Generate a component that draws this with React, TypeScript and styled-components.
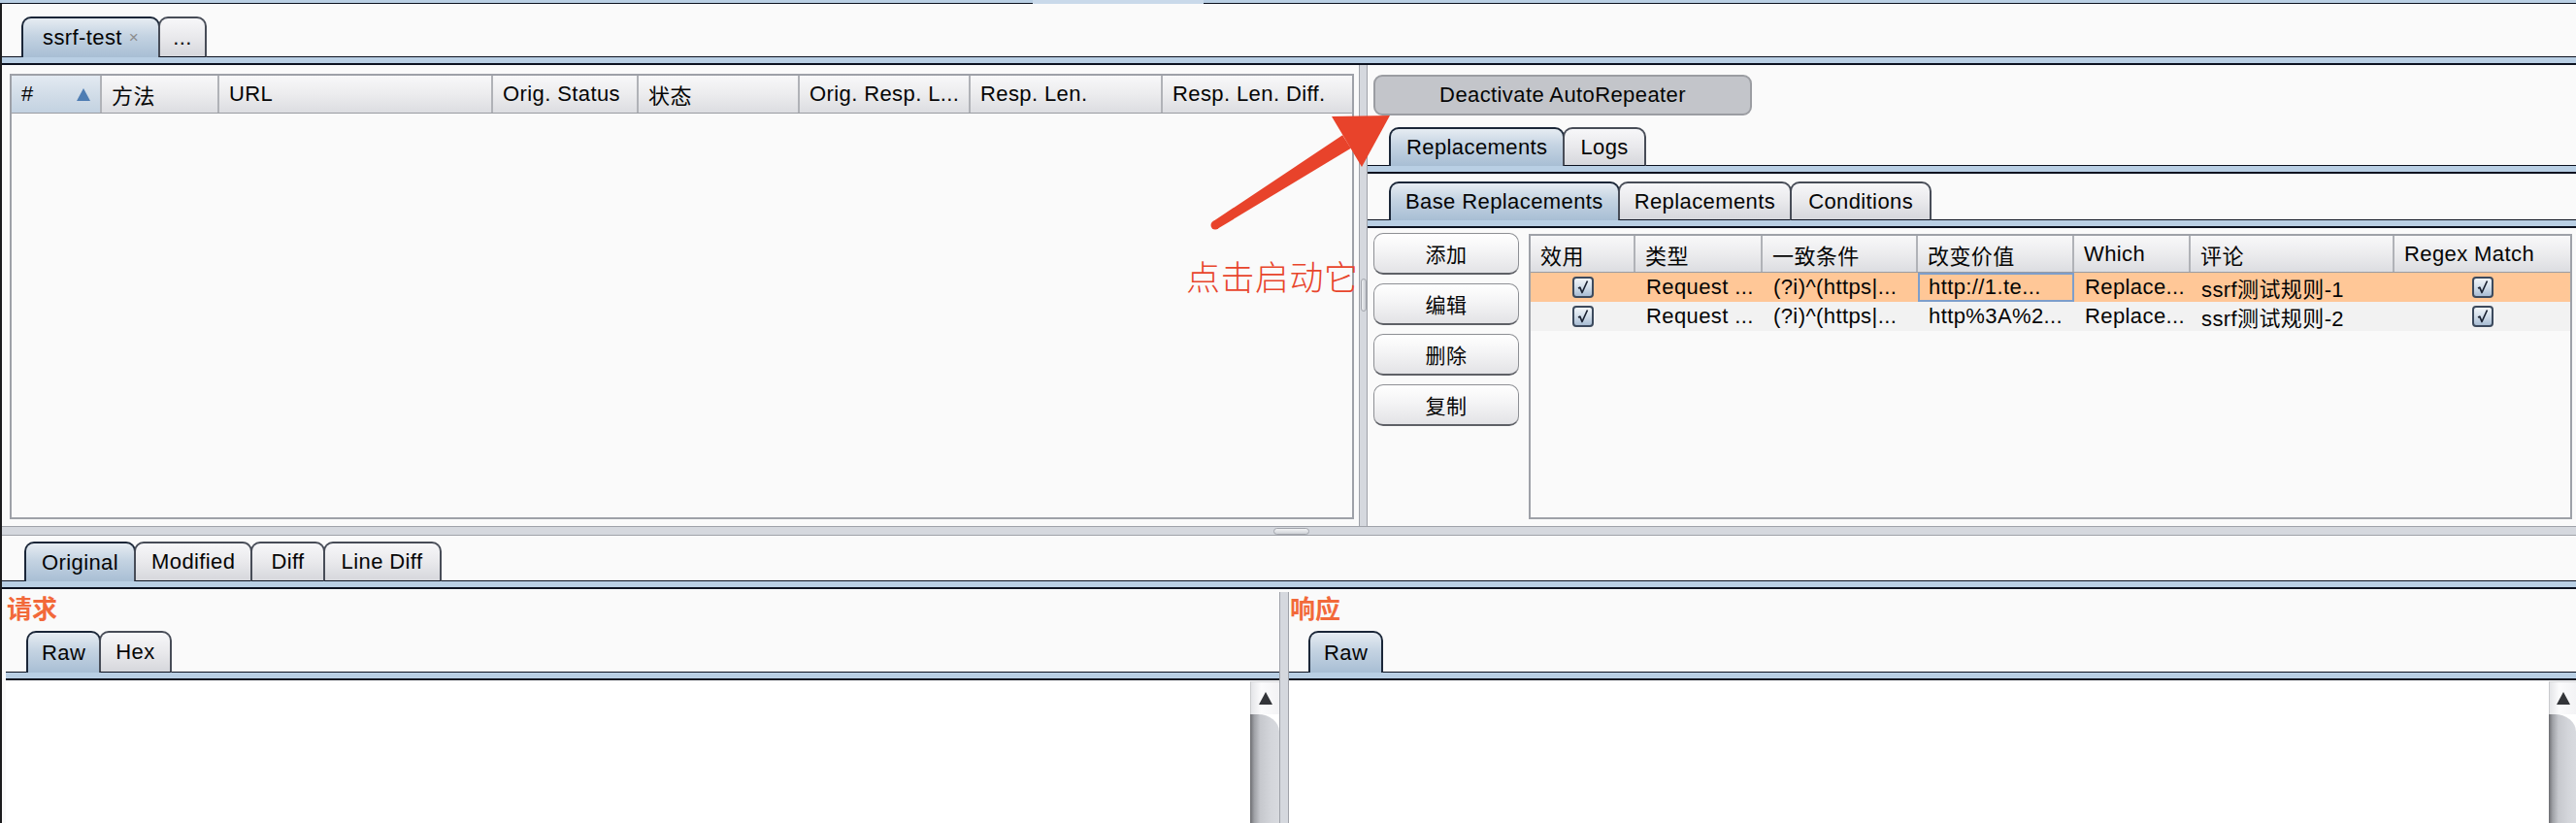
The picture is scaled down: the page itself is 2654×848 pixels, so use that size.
import React from "react";
import styled, { createGlobalStyle } from "styled-components";

const DARK = "#0c1220";
const BAND = "#b9cfe4";
const SPLIT = "#d5d8de";
const SPLIT_EDGE = "#9fa2a9";

const GlobalStyle = createGlobalStyle`
  html, body { margin: 0; padding: 0; background: #fafafa; }
  body {
    font-family: "Liberation Sans", "Noto Sans CJK SC", sans-serif;
    font-size: 22px;
    letter-spacing: 0.4px;
    color: #050505;
  }
  * { box-sizing: border-box; }
`;

const Window = styled.div`
  position: relative;
  width: 2654px;
  height: 848px;
  overflow: hidden;
  background: #fafafa;
  display: flex;
  flex-direction: column;
`;

const TopStrip = styled.div`
  display: flex;
  height: 4px;
  flex: none;
`;

const StripSeg = styled.div<{ $w?: number; $open?: boolean }>`
  height: 4px;
  ${(p) => (p.$w ? `width: ${p.$w}px; flex: none;` : `flex: 1;`)}
  background: ${(p) => (p.$open ? "#c9d9ea" : BAND)};
  border-bottom: 1px solid ${(p) => (p.$open ? "#c9d9ea" : DARK)};
`;

const Main = styled.div`
  flex: 1;
  display: flex;
  flex-direction: column;
  border-left: 2px solid #1c1c1e;
  min-height: 0;
`;

const TabRow = styled.div<{ $pad: number; $top: number }>`
  display: flex;
  align-items: flex-end;
  flex: none;
  padding: ${(p) => p.$top}px 0 0 ${(p) => p.$pad}px;
  box-shadow: inset 0 -1px 0 ${DARK};
`;

const Tab = styled.div<{ $active?: boolean; $h: number; $px?: number }>`
  height: ${(p) => p.$h}px;
  padding: 0 ${(p) => p.$px ?? 16}px;
  display: flex;
  align-items: center;
  white-space: nowrap;
  border: 2px solid ${(p) => (p.$active ? "#1a2638" : "#474c57")};
  border-bottom: ${(p) => (p.$active ? "none" : `1px solid ${DARK}`)};
  border-radius: 10px 10px 0 0;
  margin-right: -2px;
  background: ${(p) =>
    p.$active
      ? "linear-gradient(#e6ecf2 0%, #c4d3e2 45%, #a8bed4 100%)"
      : "linear-gradient(#f7f7f9 0%, #e9e9ec 50%, #d6d7dc 100%)"};
`;

const Close = styled.span`
  color: #8c8c8c;
  font-size: 17px;
  margin-left: 7px;
`;

const Band = styled.div`
  height: 8px;
  flex: none;
  background: ${BAND};
  border-bottom: 2px solid ${DARK};
`;

const TopHalf = styled.div`
  height: 475px;
  flex: none;
  display: flex;
`;

const LeftPane = styled.div`
  width: 1398px;
  flex: none;
  padding: 9px 5px 7px 8px;
  display: flex;
`;

const VDivider = styled.div`
  width: 9px;
  flex: none;
  background: ${SPLIT};
  border-left: 1px solid ${SPLIT_EDGE};
  border-right: 1px solid ${SPLIT_EDGE};
  display: flex;
  flex-direction: column;
  align-items: center;
`;

const VGrip = styled.div`
  margin-top: 220px;
  width: 6px;
  height: 34px;
  border-radius: 4px;
  background: linear-gradient(90deg, #eceef1, #c9ccd2);
  border: 1px solid #a3a6ad;
`;

const RightPane = styled.div`
  flex: 1;
  min-width: 0;
  display: flex;
  flex-direction: column;
  padding-top: 10px;
`;

const ButtonRow = styled.div`
  display: flex;
  padding-left: 6px;
  flex: none;
`;

const DeactivateButton = styled.div`
  width: 390px;
  height: 42px;
  border-radius: 9px;
  border: 2px solid #9b9da2;
  background: #c3c5ca;
  display: flex;
  align-items: center;
  justify-content: center;
`;

const RulesArea = styled.div`
  flex: 1;
  min-height: 0;
  display: flex;
  padding: 5px 4px 7px 6px;
`;

const ButtonColumn = styled.div`
  width: 150px;
  flex: none;
  display: flex;
  flex-direction: column;
  gap: 9px;
  margin-right: 10px;
`;

const SideButton = styled.div`
  height: 43px;
  border-radius: 10px;
  border: 1px solid #8d8f94;
  border-bottom: 2px solid #5e6066;
  background: linear-gradient(#ffffff 0%, #f4f4f5 45%, #e3e3e6 100%);
  display: flex;
  align-items: center;
  justify-content: center;
  font-size: 21px;
`;

const Table = styled.div<{ $mt?: number }>`
  flex: 1;
  min-width: 0;
  margin-top: ${(p) => p.$mt ?? 0}px;
  border: 2px solid #9ea1a8;
  background: #fafafa;
  display: flex;
  flex-direction: column;
`;

const HeaderRow = styled.div<{ $h: number }>`
  display: flex;
  height: ${(p) => p.$h}px;
  flex: none;
  border-bottom: 1px solid #9a9ca2;
`;

const HeadCell = styled.div<{ $w?: number; $sorted?: boolean }>`
  ${(p) => (p.$w ? `width: ${p.$w}px; flex: none;` : `flex: 1;`)}
  padding: 0 10px;
  display: flex;
  align-items: center;
  justify-content: space-between;
  white-space: nowrap;
  overflow: hidden;
  background: ${(p) =>
    p.$sorted
      ? "linear-gradient(#e3eaf2 0%, #d2dde8 50%, #c3d2e1 100%)"
      : "linear-gradient(#f8f8f9 0%, #ececee 50%, #dcdde1 100%)"};
  border-right: ${(p) => (p.$w ? "2px solid #b0b2b7" : "none")};
`;

const SortArrow = styled.span`
  width: 0;
  height: 0;
  border-left: 7px solid transparent;
  border-right: 7px solid transparent;
  border-bottom: 13px solid #4e7db3;
`;

const DataRow = styled.div<{ $bg: string }>`
  display: flex;
  height: 30px;
  flex: none;
  background: ${(p) => p.$bg};
`;

const Cell = styled.div<{ $w?: number; $center?: boolean; $focus?: boolean }>`
  ${(p) => (p.$w ? `width: ${p.$w}px; flex: none;` : `flex: 1;`)}
  padding: 0 11px;
  display: flex;
  align-items: center;
  justify-content: ${(p) => (p.$center ? "center" : "flex-start")};
  white-space: nowrap;
  overflow: hidden;
  box-shadow: ${(p) => (p.$focus ? "inset 0 0 0 2px #7d9ecb" : "none")};
`;

const CheckBox = styled.span`
  width: 22px;
  height: 22px;
  border-radius: 4px;
  border: 2px solid #3c4a5d;
  background: linear-gradient(#f2f6fa 0%, #d2deea 50%, #a8bcd3 100%);
  display: flex;
  align-items: center;
  justify-content: center;
`;

const HDivider = styled.div`
  height: 10px;
  flex: none;
  background: ${SPLIT};
  border-top: 1px solid ${SPLIT_EDGE};
  border-bottom: 1px solid ${SPLIT_EDGE};
  display: flex;
  align-items: center;
  padding-left: 1310px;
`;

const HGrip = styled.div`
  width: 37px;
  height: 7px;
  border-radius: 4px;
  background: linear-gradient(#f2f3f5, #cfd2d7);
  border: 1px solid #a3a6ad;
`;

const BottomHalf = styled.div`
  flex: 1;
  min-height: 0;
  display: flex;
  flex-direction: column;
`;

const MessageSplit = styled.div`
  flex: 1;
  min-height: 0;
  display: flex;
`;

const MessagePane = styled.div<{ $w?: number; $pl?: number }>`
  ${(p) => (p.$w ? `width: ${p.$w}px; flex: none;` : `flex: 1; min-width: 0;`)}
  padding-left: ${(p) => p.$pl ?? 0}px;
  display: flex;
  flex-direction: column;
`;

const PaneLabel = styled.div`
  margin: 4px 0 0 1px;
  height: 31px;
  line-height: 30px;
  font-family: "Noto Sans CJK SC", sans-serif;
  font-size: 26px;
  font-weight: 700;
  color: #f2693a;
  letter-spacing: 0;
`;

const MsgDivider = styled.div`
  width: 10px;
  flex: none;
  margin-top: 3px;
  background: ${SPLIT};
  border-left: 1px solid ${SPLIT_EDGE};
  border-right: 1px solid ${SPLIT_EDGE};
`;

const Editor = styled.div`
  flex: 1;
  min-height: 0;
  display: flex;
  background: #ffffff;
`;

const EditorText = styled.div`
  flex: 1;
`;

const ScrollBar = styled.div<{ $w: number }>`
  width: ${(p) => p.$w}px;
  flex: none;
  display: flex;
  flex-direction: column;
  margin-top: 1px;
`;

const ScrollUp = styled.div`
  height: 34px;
  flex: none;
  border-left: 1px solid #c9cacd;
  border-top: 1px solid #d8d9dc;
  background: linear-gradient(90deg, #e4e5e8 0%, #fbfbfc 35%, #f3f3f5 100%);
  display: flex;
  align-items: center;
  justify-content: center;
`;

const UpArrow = styled.span`
  width: 0;
  height: 0;
  border-left: 7px solid transparent;
  border-right: 7px solid transparent;
  border-bottom: 13px solid #333539;
`;

const ScrollTrack = styled.div`
  flex: 1;
  border-top-right-radius: 22px 18px;
  background: linear-gradient(90deg, #6c6d71 0%, #9fa1a6 14%, #c6c8cd 35%, #d3d5da 70%, #d8dadf 100%);
`;

const Annotation = styled.div`
  position: absolute;
  left: 1222px;
  top: 264px;
  font-family: "Noto Sans CJK SC", sans-serif;
  font-weight: 300;
  font-size: 35px;
  line-height: 40px;
  letter-spacing: 0.5px;
  color: #e8452c;
  white-space: nowrap;
`;

const ArrowSvg = styled.svg`
  position: absolute;
  left: 1240px;
  top: 110px;
  width: 200px;
  height: 130px;
`;

const leftCols: { label: string; w?: number; sorted?: boolean }[] = [
  { label: "#", w: 93, sorted: true },
  { label: "方法", w: 121 },
  { label: "URL", w: 282 },
  { label: "Orig. Status", w: 150 },
  { label: "状态", w: 166 },
  { label: "Orig. Resp. L...", w: 176 },
  { label: "Resp. Len.", w: 198 },
  { label: "Resp. Len. Diff." },
];

const ruleCols: { label: string; w?: number }[] = [
  { label: "效用", w: 108 },
  { label: "类型", w: 131 },
  { label: "一致条件", w: 160 },
  { label: "改变价值", w: 161 },
  { label: "Which", w: 120 },
  { label: "评论", w: 210 },
  { label: "Regex Match" },
];

const rules = [
  {
    type: "Request ...",
    match: "(?i)^(https|...",
    value: "http://1.te...",
    which: "Replace...",
    comment: "ssrf测试规则-1",
    bg: "#ffc797",
    focus: true,
  },
  {
    type: "Request ...",
    match: "(?i)^(https|...",
    value: "http%3A%2...",
    which: "Replace...",
    comment: "ssrf测试规则-2",
    bg: "#f2f2f2",
    focus: false,
  },
];

const Check = () => (
  <CheckBox>
    <svg width="14" height="16" viewBox="0 0 14 16">
      <path d="M2 9 L3.8 8.2 L6 13.5 L11.5 1.5" fill="none" stroke="#1a2232" strokeWidth="1.7" strokeLinejoin="round" />
    </svg>
  </CheckBox>
);

const Scroller = ({ w }: { w: number }) => (
  <ScrollBar $w={w}>
    <ScrollUp>
      <UpArrow />
    </ScrollUp>
    <ScrollTrack />
  </ScrollBar>
);

export default function App() {
  return (
    <>
      <GlobalStyle />
      <Window>
        <TopStrip>
          <StripSeg $w={1064} />
          <StripSeg $w={176} $open />
          <StripSeg />
        </TopStrip>
        <Main>
          <TabRow $pad={20} $top={13}>
            <Tab $active $h={42} $px={20}>
              ssrf-test<Close>×</Close>
            </Tab>
            <Tab $h={42} $px={13}>
              ...
            </Tab>
          </TabRow>
          <Band />
          <TopHalf>
            <LeftPane>
              <Table>
                <HeaderRow $h={39}>
                  {leftCols.map((c) => (
                    <HeadCell key={c.label} $w={c.w} $sorted={c.sorted}>
                      <span>{c.label}</span>
                      {c.sorted && <SortArrow />}
                    </HeadCell>
                  ))}
                </HeaderRow>
              </Table>
            </LeftPane>
            <VDivider>
              <VGrip />
            </VDivider>
            <RightPane>
              <ButtonRow>
                <DeactivateButton>Deactivate AutoRepeater</DeactivateButton>
              </ButtonRow>
              <TabRow $pad={22} $top={12}>
                <Tab $active $h={40}>Replacements</Tab>
                <Tab $h={40} $px={16}>Logs</Tab>
              </TabRow>
              <Band />
              <TabRow $pad={22} $top={8}>
                <Tab $active $h={40} $px={15}>Base Replacements</Tab>
                <Tab $h={40} $px={15}>Replacements</Tab>
                <Tab $h={40} $px={17}>Conditions</Tab>
              </TabRow>
              <Band />
              <RulesArea>
                <ButtonColumn>
                  <SideButton>添加</SideButton>
                  <SideButton>编辑</SideButton>
                  <SideButton>删除</SideButton>
                  <SideButton>复制</SideButton>
                </ButtonColumn>
                <Table $mt={1}>
                  <HeaderRow $h={38}>
                    {ruleCols.map((c) => (
                      <HeadCell key={c.label} $w={c.w}>
                        <span>{c.label}</span>
                      </HeadCell>
                    ))}
                  </HeaderRow>
                  {rules.map((r) => (
                    <DataRow key={r.comment} $bg={r.bg}>
                      <Cell $w={ruleCols[0].w} $center>
                        <Check />
                      </Cell>
                      <Cell $w={ruleCols[1].w}>{r.type}</Cell>
                      <Cell $w={ruleCols[2].w}>{r.match}</Cell>
                      <Cell $w={ruleCols[3].w} $focus={r.focus}>
                        {r.value}
                      </Cell>
                      <Cell $w={ruleCols[4].w}>{r.which}</Cell>
                      <Cell $w={ruleCols[5].w}>{r.comment}</Cell>
                      <Cell $center>
                        <Check />
                      </Cell>
                    </DataRow>
                  ))}
                </Table>
              </RulesArea>
            </RightPane>
          </TopHalf>
          <HDivider>
            <HGrip />
          </HDivider>
          <BottomHalf>
            <TabRow $pad={23} $top={6}>
              <Tab $active $h={41}>Original</Tab>
              <Tab $h={41}>Modified</Tab>
              <Tab $h={41} $px={19}>Diff</Tab>
              <Tab $h={41} $px={17}>Line Diff</Tab>
            </TabRow>
            <Band />
            <MessageSplit>
              <MessagePane $w={1316} $pl={4}>
                <PaneLabel>请求</PaneLabel>
                <TabRow $pad={21} $top={8}>
                  <Tab $active $h={43} $px={14}>Raw</Tab>
                  <Tab $h={43} $px={15}>Hex</Tab>
                </TabRow>
                <Band />
                <Editor>
                  <EditorText />
                  <Scroller w={30} />
                </Editor>
              </MessagePane>
              <MsgDivider />
              <MessagePane>
                <PaneLabel>响应</PaneLabel>
                <TabRow $pad={20} $top={8}>
                  <Tab $active $h={43} $px={14}>Raw</Tab>
                </TabRow>
                <Band />
                <Editor>
                  <EditorText />
                  <Scroller w={28} />
                </Editor>
              </MessagePane>
            </MessageSplit>
          </BottomHalf>
        </Main>
        <Annotation>点击启动它</Annotation>
        <ArrowSvg viewBox="1240 110 200 130">
          <circle cx="1252" cy="232" r="4.5" fill="#e8432b" />
          <polygon points="1249.6,228.2 1383.2,139.3 1391.8,152.7 1254.4,235.8" fill="#e8432b" />
          <polygon points="1372,120 1432,119 1403,172" fill="#e8432b" />
        </ArrowSvg>
      </Window>
    </>
  );
}
